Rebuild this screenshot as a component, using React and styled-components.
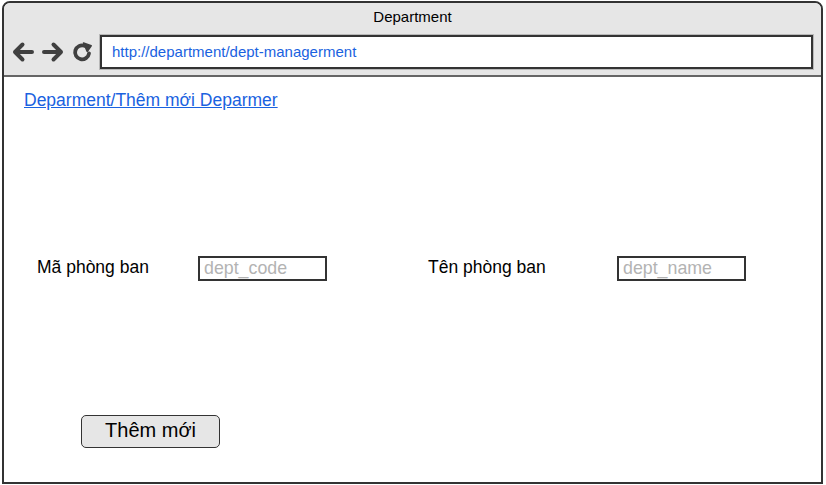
import React from "react";
import styled, { createGlobalStyle } from "styled-components";

const Global = createGlobalStyle`
  html, body { margin: 0; padding: 0; background: #ffffff; }
  body { font-family: "Liberation Sans", Arial, sans-serif; }
`;

const Frame = styled.div`
  box-sizing: border-box;
  margin: 1px 0 0 2px;
  width: 821px;
  height: 483px;
  border: 2px solid #333333;
  border-radius: 8px 8px 0 0;
  display: flex;
  flex-direction: column;
  overflow: hidden;
  background: #ffffff;
`;

const Header = styled.div`
  background: #e6e6e6;
  height: 72px;
  border-bottom: 2px solid #666666;
  display: flex;
  flex-direction: column;
  flex-shrink: 0;
`;

const Title = styled.div`
  height: 32px;
  line-height: 28px;
  text-align: center;
  font-size: 15px;
  color: #000000;
`;

const Toolbar = styled.div`
  display: flex;
  align-items: center;
  padding-left: 8px;
`;

const NavIcon = styled.svg`
  width: ${(p) => p.$w}px;
  height: 24px;
  margin-right: ${(p) => p.$gap}px;
  flex-shrink: 0;
`;

const Address = styled.div`
  box-sizing: border-box;
  width: 713px;
  height: 34px;
  background: #ffffff;
  border: 2px solid #333333;
  box-shadow: 0 0 0 1px #b8b8b8;
  display: flex;
  align-items: center;
  padding-left: 10px;
  padding-bottom: 1px;
  font-size: 15px;
  color: #1a62e0;
`;

const Body = styled.div`
  flex: 1;
  display: flex;
  flex-direction: column;
  padding: 13px 0 0 20px;
`;

const Crumb = styled.a`
  font-size: 17.5px;
  color: #1a62e0;
  text-decoration: underline;
  line-height: 20px;
  align-self: flex-start;
  cursor: pointer;
`;

const FormRow = styled.div`
  display: flex;
  align-items: center;
  margin-top: 146px;
  padding-left: 13px;
`;

const Label = styled.div`
  width: ${(p) => p.$w}px;
  font-size: 17.5px;
  color: #000000;
  padding-bottom: 2px;
`;

const Input = styled.input`
  box-sizing: border-box;
  width: ${(p) => p.$w}px;
  height: 25px;
  border: 2px solid #333333;
  margin-right: ${(p) => p.$gap}px;
  padding: 0 4px;
  font-family: "Liberation Sans", Arial, sans-serif;
  font-size: 17.8px;
  color: #000;
  outline: none;
  &::placeholder { color: #b3b3b3; }
`;

const Button = styled.button`
  box-sizing: border-box;
  margin: 134px 0 0 57px;
  align-self: flex-start;
  width: 139px;
  height: 33px;
  background: #e6e6e6;
  border: 1.5px solid #333333;
  border-radius: 5px;
  font-family: "Liberation Sans", Arial, sans-serif;
  font-size: 20px;
  color: #000000;
  padding: 0 0 2px;
`;

export default function App() {
  return (
    <>
      <Global />
      <Frame>
        <Header>
          <Title>Department</Title>
          <Toolbar>
            <NavIcon $w={22} $gap={8} viewBox="0 0 22 24">
              <path d="M20 12 H3 M10.5 4.5 L3 12 L10.5 19.5" fill="none" stroke="#404040" strokeWidth="4" strokeLinecap="round" strokeLinejoin="round" />
            </NavIcon>
            <NavIcon $w={22} $gap={8} viewBox="0 0 22 24">
              <path d="M2 12 H19 M11.5 4.5 L19 12 L11.5 19.5" fill="none" stroke="#404040" strokeWidth="4" strokeLinecap="round" strokeLinejoin="round" />
            </NavIcon>
            <NavIcon $w={21} $gap={7} viewBox="0 0 21 24">
              <path d="M17 13.5 A7 7 0 1 1 12.5 5.8" fill="none" stroke="#404040" strokeWidth="3.8" strokeLinecap="round" />
              <path d="M11.5 3 L19.2 5.8 L15.2 11.5 Z" fill="#404040" stroke="#404040" strokeWidth="1.5" strokeLinejoin="round" />
            </NavIcon>
            <Address>http://department/dept-managerment</Address>
          </Toolbar>
        </Header>
        <Body>
          <Crumb>Deparment/Thêm mới Deparmer</Crumb>
          <FormRow>
            <Label $w={161}>Mã phòng ban</Label>
            <Input $w={129} $gap={101} placeholder="dept_code" />
            <Label $w={189}>Tên phòng ban</Label>
            <Input $w={129} $gap={0} placeholder="dept_name" />
          </FormRow>
          <Button>Thêm mới</Button>
        </Body>
      </Frame>
    </>
  );
}
